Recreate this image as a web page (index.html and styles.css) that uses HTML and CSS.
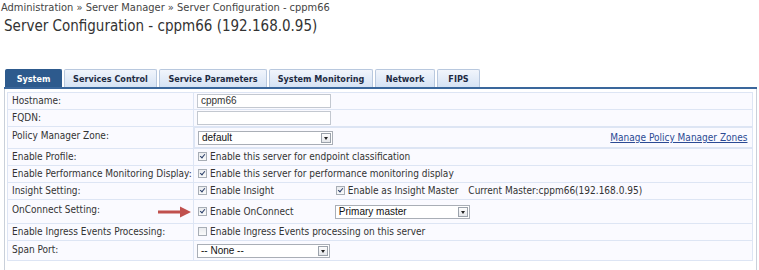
FILE: index.html
```html
<!DOCTYPE html>
<html lang="en">
<head>
    <meta charset="UTF-8">
    <title>Server Configuration - cppm66</title>
    <link rel="stylesheet" href="styles.css">
</head>
<body>

    <div class="crumbs">Administration &raquo; Server Manager &raquo; Server Configuration - cppm66</div>
    <h1 class="page-title">Server Configuration - cppm66 (192.168.0.95)</h1>

    <div class="tabs">
        <ul class="tab-bar">
            <li class="tab active">System</li>
            <li class="tab">Services Control</li>
            <li class="tab">Service Parameters</li>
            <li class="tab">System Monitoring</li>
            <li class="tab">Network</li>
            <li class="tab">FIPS</li>
        </ul>

        <div class="tab-panel">
            <table class="form-table">
                <tr>
                    <td class="label">Hostname:</td>
                    <td class="value"><span class="text-input">cppm66</span></td>
                </tr>
                <tr>
                    <td class="label">FQDN:</td>
                    <td class="value"><span class="text-input"></span></td>
                </tr>
                <tr class="select-row">
                    <td class="label">Policy Manager Zone:</td>
                    <td class="value split">
                        <span class="select">default<i class="select-btn"></i></span>
                        <a class="manage-link" href="#">Manage Policy Manager Zones</a>
                    </td>
                </tr>
                <tr>
                    <td class="label">Enable Profile:</td>
                    <td class="value"><span class="check on"></span>Enable this server for endpoint classification</td>
                </tr>
                <tr>
                    <td class="label">Enable Performance Monitoring Display:</td>
                    <td class="value"><span class="check on"></span>Enable this server for performance monitoring display</td>
                </tr>
                <tr>
                    <td class="label">Insight Setting:</td>
                    <td class="value">
                        <span class="inline-group w-insight"><span class="check on"></span>Enable Insight</span>
                        <span class="inline-group"><span class="check on"></span>Enable as Insight Master</span>
                        <span class="current-master">Current Master:cppm66(192.168.0.95)</span>
                    </td>
                </tr>
                <tr class="onconnect-row">
                    <td class="label">OnConnect Setting:</td>
                    <td class="value">
                        <svg class="pointer-arrow" width="34" height="12" viewBox="0 0 34 12">
                            <path d="M0 4.5 H22 V0.5 L33 6 L22 11.5 V7.5 H0 Z" fill="#c0504d"/>
                        </svg>
                        <span class="inline-group w-insight"><span class="check on"></span>Enable OnConnect</span>
                        <span class="select">Primary master<i class="select-btn"></i></span>
                    </td>
                </tr>
                <tr>
                    <td class="label">Enable Ingress Events Processing:</td>
                    <td class="value"><span class="check"></span>Enable Ingress Events processing on this server</td>
                </tr>
                <tr class="select-row">
                    <td class="label">Span Port:</td>
                    <td class="value"><span class="select narrow">-- None --<i class="select-btn"></i></span></td>
                </tr>
            </table>
        </div>
    </div>

</body>
</html>
```

FILE: styles.css
```css
/* page */
body {
    margin: 0;
    font-family: "DejaVu Sans Condensed", "DejaVu Sans", sans-serif;
    font-size: 10px;
    color: #333;
    background: #fff;
}

.crumbs {
    padding: 1px 0 0 1px;
    font-size: 11px;
    line-height: 13px;
    color: #444;
}

.page-title {
    margin: 3px 0 0 4px;
    font-size: 15px;
    font-weight: normal;
    line-height: 19px;
    color: #333;
}

/* tabs */
.tabs {
    margin: 33px 2px 0 4px;
}

.tab-bar {
    display: flex;
    gap: 2px;
    list-style: none;
    margin: 0;
    padding: 0 0 0 1px;
    border-bottom: 2px solid #3a679c;
}

.tab {
    box-sizing: border-box;
    height: 18px;
    line-height: 18px;
    padding: 0;
    font-weight: bold;
    font-size: 9px;
    white-space: nowrap;
    color: #1e2b42;
    background: linear-gradient(#f1f5fc, #d6e3f4);
    border: 1px solid #b8c8de;
    border-bottom: none;
    border-radius: 2px 2px 0 0;
    text-align: center;
}

.tab.active {
    color: #fff;
    background: #2d5a8d;
    border-color: #2d5a8d;
}

.tab:nth-child(1) { width: 57px; }
.tab:nth-child(2) { width: 93px; }
.tab:nth-child(3) { width: 108px; }
.tab:nth-child(4) { width: 104px; }
.tab:nth-child(5) { width: 60px; }
.tab:nth-child(6) { width: 43px; }

/* panel with the form */
.tab-panel {
    border-left: 1px solid #c9d0da;
    border-right: 1px solid #c9d0da;
    padding: 3px 3px 14px 2px;
}

.form-table {
    width: 100%;
    border-collapse: collapse;
    background: #fafaff;
}

.form-table td {
    border: 1px solid #dde5f4;
    padding: 1px 0;
    line-height: 14px;
    vertical-align: top;
    white-space: nowrap;
}

.form-table .label {
    width: 181px;
    padding-left: 4px;
}

.form-table .value {
    position: relative;
    padding-left: 3px;
}

.select-row td {
    padding-top: 3px;
    padding-bottom: 2px;
}

.select-row td.label {
    padding-top: 2px;
}

.onconnect-row td.label {
    padding-top: 3px;
}

.onconnect-row td.value {
    padding-top: 5px;
    padding-bottom: 4px;
}

.split {
    display: flex;
    justify-content: space-between;
    align-items: center;
}

/* fake inputs */
.text-input {
    display: block;
    box-sizing: border-box;
    width: 134px;
    height: 14px;
    padding-left: 3px;
    line-height: 12px;
    background: #fff;
    border: 1px solid #c3c8d0;
    font-family: "Liberation Sans", Arial, sans-serif;
    font-size: 10px;
}

.select {
    display: inline-flex;
    justify-content: space-between;
    align-items: center;
    box-sizing: border-box;
    width: 135px;
    height: 14px;
    padding-left: 3px;
    background: #fff;
    border: 1px solid #a9aeb6;
    font-family: "Liberation Sans", Arial, sans-serif;
    font-size: 10px;
    line-height: 12px;
    color: #111;
    vertical-align: top;
}

.select.narrow {
    width: 133px;
}

.select-btn {
    width: 10px;
    height: 10px;
    margin-right: 1px;
    box-sizing: border-box;
    border: 1px solid #9ba2ab;
    background: linear-gradient(#fdfdfd, #e4e6ea);
    position: relative;
}

.select-btn::after {
    content: "";
    position: absolute;
    left: 2px;
    top: 3px;
    border-left: 2px solid transparent;
    border-right: 2px solid transparent;
    border-top: 3px solid #222;
}

.manage-link {
    margin-right: 4px;
    color: #2b4a94;
    font-size: 10px;
}

/* checkbox */
.check {
    display: inline-block;
    box-sizing: border-box;
    width: 9px;
    height: 9px;
    margin: 0 3px 0 1px;
    border: 1px solid #a7adb5;
    background: linear-gradient(#e9ebee, #fafafa);
    vertical-align: -1px;
    position: relative;
}

.check.on::after {
    content: "";
    position: absolute;
    left: 2px;
    top: 0;
    width: 2px;
    height: 4px;
    border-right: 1.3px solid #2b3f6a;
    border-bottom: 1.3px solid #2b3f6a;
    transform: rotate(40deg);
}

.inline-group {
    display: inline-block;
}

.w-insight {
    width: 135px;
}

.current-master {
    margin-left: 7px;
}

.pointer-arrow {
    position: absolute;
    left: -36px;
    top: 6px;
}
```
